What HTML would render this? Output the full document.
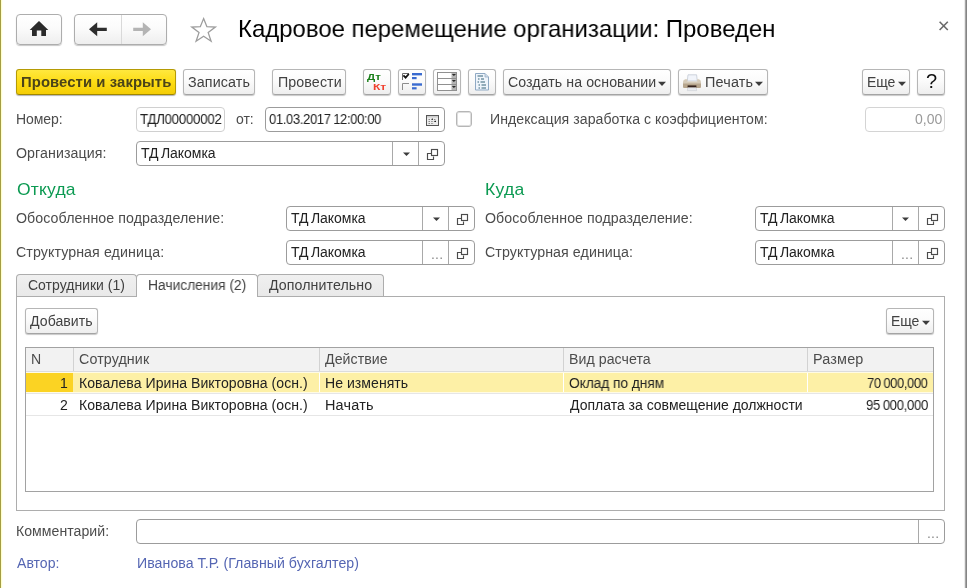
<!DOCTYPE html>
<html lang="ru"><head><meta charset="utf-8"><title>Кадровое перемещение организации</title>
<style>
html,body{margin:0;padding:0;}
body{width:967px;height:588px;position:relative;overflow:hidden;background:#fff;font-family:"Liberation Sans",sans-serif;}
.a{position:absolute;box-sizing:border-box;}
.t{position:absolute;white-space:pre;will-change:transform;}
.b{position:absolute;box-sizing:border-box;border:1px solid #b6b6b6;border-bottom-color:#a4a4a4;border-radius:3px;background:linear-gradient(#ffffff 0%,#fbfbfb 45%,#eeeeee 100%);box-shadow:0 1px 1px rgba(0,0,0,.22);}
.y{border-color:#b59b05;border-bottom-color:#a08700;background:linear-gradient(#ffe83e 0%,#fddc14 50%,#f4cd05 100%);box-shadow:0 1px 1px rgba(0,0,0,.3);}
.f{position:absolute;box-sizing:border-box;border:1px solid #9c9c9c;border-radius:4px;background:#fff;}
.v{position:absolute;width:1px;background:#a9a9a9;}
.tab{position:absolute;box-sizing:border-box;border:1px solid #adadad;border-bottom:none;border-radius:4px 4px 0 0;background:linear-gradient(#f0f0f0,#e9e9e9);}
.tab.on{background:#fff;}
svg{position:absolute;overflow:visible;}

</style></head><body>
<div class="a" style="left:0;top:0;width:1px;height:588px;background:#a49d44"></div>
<div class="a" style="left:1px;top:0;width:1px;height:588px;background:#ffffca"></div>
<div class="a" style="left:2px;top:0;width:1px;height:588px;background:#fffff2"></div>
<div class="a" style="left:964px;top:0;width:1px;height:588px;background:#ececec"></div>
<div class="a" style="left:965px;top:0;width:1px;height:588px;background:#a6a6a6"></div>
<div class="a" style="left:966px;top:0;width:1px;height:588px;background:#858585"></div>

<!-- nav buttons -->
<div class="b" style="left:16px;top:14px;width:46px;height:31px;border-radius:4px;border-color:#adadad"></div>
<div class="b" style="left:74px;top:14px;width:93px;height:31px;border-radius:4px;border-color:#adadad"></div>
<div class="v" style="left:121px;top:15px;height:29px;background:#d9d9d9"></div>

<!-- toolbar -->
<div class="b y" style="left:16px;top:69px;width:160px;height:26px"></div>
<div class="b" style="left:183px;top:69px;width:72px;height:26px"></div>
<div class="b" style="left:272px;top:69px;width:74px;height:26px"></div>
<div class="b" style="left:363px;top:69px;width:28px;height:26px"></div>
<div class="b" style="left:398px;top:69px;width:28px;height:26px"></div>
<div class="b" style="left:433px;top:69px;width:28px;height:26px"></div>
<div class="b" style="left:468px;top:69px;width:28px;height:26px"></div>
<div class="b" style="left:503px;top:69px;width:168px;height:26px"></div>
<div class="b" style="left:678px;top:69px;width:90px;height:26px"></div>
<div class="b" style="left:862px;top:69px;width:48px;height:26px"></div>
<div class="b" style="left:917px;top:69px;width:28px;height:26px"></div>

<!-- fields row 1 -->
<div class="f" style="left:136px;top:107px;width:89px;height:25px;border-color:#d0d0d0"></div>
<div class="f" style="left:265px;top:107px;width:180px;height:25px"></div>
<div class="v" style="left:418px;top:108px;height:23px"></div>
<div class="f" style="left:456px;top:111px;width:16px;height:16px;border-color:#b6b6b6;border-radius:3px;box-shadow:inset 0 0 0 1px #dedede"></div>
<div class="f" style="left:865px;top:107px;width:80px;height:25px;border-color:#d4d4d4"></div>
<!-- org -->
<div class="f" style="left:136px;top:141px;width:309px;height:25px"></div>
<div class="v" style="left:392px;top:142px;height:23px"></div>
<div class="v" style="left:418px;top:142px;height:23px"></div>
<!-- from -->
<div class="f" style="left:286px;top:206px;width:189px;height:25px"></div>
<div class="v" style="left:422px;top:207px;height:23px"></div>
<div class="v" style="left:448px;top:207px;height:23px"></div>
<div class="f" style="left:286px;top:240px;width:189px;height:25px"></div>
<div class="v" style="left:422px;top:241px;height:23px"></div>
<div class="v" style="left:448px;top:241px;height:23px"></div>
<!-- to -->
<div class="f" style="left:755px;top:206px;width:190px;height:25px"></div>
<div class="v" style="left:892px;top:207px;height:23px"></div>
<div class="v" style="left:918px;top:207px;height:23px"></div>
<div class="f" style="left:755px;top:240px;width:190px;height:25px"></div>
<div class="v" style="left:892px;top:241px;height:23px"></div>
<div class="v" style="left:918px;top:241px;height:23px"></div>

<!-- tab panel -->
<div class="a" style="left:16px;top:296px;width:929px;height:215px;border:1px solid #adadad;background:#fff"></div>
<div class="tab" style="left:16px;top:274px;width:121px;height:22px"></div>
<div class="tab on" style="left:136px;top:274px;width:122px;height:23px"></div>
<div class="tab" style="left:257px;top:274px;width:127px;height:22px"></div>

<div class="b" style="left:25px;top:308px;width:73px;height:26px"></div>
<div class="b" style="left:886px;top:308px;width:48px;height:26px"></div>

<!-- grid -->
<div class="a" style="left:25px;top:347px;width:909px;height:145px;border:1px solid #a2a2a2;background:#fff"></div>
<div class="a" style="left:26px;top:348px;width:907px;height:23px;background:#f2f2f2"></div>
<div class="a" style="left:26px;top:371px;width:907px;height:1px;background:#dcdcdc"></div>
<div class="v" style="left:73px;top:348px;height:23px;background:#d2d2d2"></div>
<div class="v" style="left:319px;top:348px;height:23px;background:#d2d2d2"></div>
<div class="v" style="left:563px;top:348px;height:23px;background:#d2d2d2"></div>
<div class="v" style="left:807px;top:348px;height:23px;background:#d2d2d2"></div>
<div class="a" style="left:26px;top:373px;width:47px;height:19px;background:#fbd323"></div>
<div class="a" style="left:73px;top:373px;width:246px;height:19px;background:#fdf0a6"></div>
<div class="a" style="left:320px;top:373px;width:243px;height:19px;background:#fdf0a6"></div>
<div class="a" style="left:564px;top:373px;width:243px;height:19px;background:#fdf0a6"></div>
<div class="a" style="left:808px;top:373px;width:125px;height:19px;background:#fdf0a6"></div>
<div class="a" style="left:26px;top:372px;width:907px;height:1px;background:#fffbe4"></div>
<div class="a" style="left:26px;top:392px;width:907px;height:1px;background:#fffbe4"></div>
<div class="a" style="left:26px;top:393px;width:907px;height:1px;background:#e6e6e6"></div>
<div class="a" style="left:26px;top:415px;width:907px;height:1px;background:#e6e6e6"></div>

<!-- comment -->
<div class="f" style="left:136px;top:519px;width:809px;height:25px"></div>
<div class="v" style="left:918px;top:520px;height:23px"></div>
<svg class="ic" width="967" height="588" viewBox="0 0 967 588" style="left:0;top:0">
<path d="M39 21.1 L48.3 29.9 H46 V36.1 H41.3 V30.5 H36.8 V36.1 H32 V29.9 H29.7 Z" fill="#2b2b2b"/>
<path d="M89 29.3 L97.2 22.3 V27.7 H106.8 V31.1 H97.2 V36.2 Z" fill="#2d2d2d"/>
<path d="M151 29.3 L142.8 22.3 V27.7 H133.2 V31.1 H142.8 V36.2 Z" fill="#b4b4b4"/>
<path d="M203.6 18.6 L206.9 26.7 L215.4 27.1 L208.2 32.6 L211.1 41.2 L203.6 36.2 L196.1 41.2 L199 32.6 L191.8 27.1 L200.3 26.7 Z" fill="none" stroke="#9c9c9c" stroke-width="1.3" stroke-linejoin="miter"/>
<path d="M939.6 21.8 L947.8 30 M947.8 21.8 L939.6 30" stroke="#6a6a6a" stroke-width="1.6" fill="none"/>
<path d="M658.0 81.7 H666.0 L662 85.89999999999999 Z" fill="#3c3c3c"/>
<path d="M755.0 81.7 H763.0 L759 85.89999999999999 Z" fill="#3c3c3c"/>
<path d="M898.0 81.7 H906.0 L902 85.89999999999999 Z" fill="#3c3c3c"/>
<path d="M922.0 320.7 H930.0 L926 324.90000000000003 Z" fill="#3c3c3c"/>
<g><path d="M402.5 80 V73.5 H409" fill="none" stroke="#6a6a6a" stroke-width="1"/><path d="M403.4 75.4 L405.6 77.6 L408.8 74" fill="none" stroke="#111" stroke-width="1.8"/><path d="M402.5 90 V83.5 H409" fill="none" stroke="#8c8c8c" stroke-width="1"/><rect x="412" y="73" width="10" height="2.4" fill="#3a6bd0"/><rect x="412" y="77" width="4.6" height="2.2" fill="#3a6bd0"/><rect x="412" y="83.3" width="10" height="2.4" fill="#3a6bd0"/><rect x="412" y="87.2" width="4.6" height="2.2" fill="#3a6bd0"/></g>
<g><rect x="437.5" y="72.5" width="19" height="6" fill="#fff" stroke="#909090" stroke-width="1"/><rect x="451.5" y="73.0" width="4.5" height="5" fill="#b4b4b4"/><path d="M451.8 73.9 H456 L453.9 76.1 Z" fill="#2a2a2a"/><rect x="437.5" y="78.5" width="19" height="6" fill="#fff" stroke="#909090" stroke-width="1"/><rect x="451.5" y="79.0" width="4.5" height="5" fill="#b4b4b4"/><path d="M451.8 79.9 H456 L453.9 82.1 Z" fill="#2a2a2a"/><rect x="437.5" y="84.5" width="19" height="6" fill="#fff" stroke="#909090" stroke-width="1"/><rect x="451.5" y="85.0" width="4.5" height="5" fill="#b4b4b4"/><path d="M451.8 85.9 H456 L453.9 88.1 Z" fill="#2a2a2a"/></g>
<g><path d="M475.5 73.5 H485 L488.5 77 V90 H475.5 Z" fill="#eef4fb" stroke="#8fa9c4" stroke-width="1"/><path d="M485 73.5 V77 H488.5" fill="#cfdcea" stroke="#9bb0c6" stroke-width="0.8"/><path d="M477.5 76 H483 M478 79 H479.5 M481 79 H484 M477.5 82 H479 M480.5 82 H485 M478.5 85 H480 M481.5 85 H486 M478.5 88 H480 M481.5 88 H486" stroke="#346379" stroke-width="1.1" fill="none"/></g>
<g><path d="M687.3 81 L688 74.8 H696.6 L697.3 81 Z" fill="#f1f4fa" stroke="#c3c9d4" stroke-width="0.8"/><path d="M685.2 79.2 H687.4 V81.4 H697.2 V79.2 H698.8 Q701 79.6 701 82 V86.4 Q701 87.9 699.5 87.9 H684.5 Q683 87.9 683 86.4 V82 Q683 79.6 685.2 79.2 Z" fill="#d5cbb9"/><path d="M683 83.4 H701 V86.4 Q701 87.9 699.5 87.9 H684.5 Q683 87.9 683 86.4 Z" fill="#b7a68d"/><rect x="687.6" y="85.4" width="8.8" height="2.3" fill="#35221a"/><path d="M687.8 87.7 H696.2 L696.7 90.6 H687.3 Z" fill="#e9ebef" stroke="#c9ccd2" stroke-width="0.6"/></g>
<g><rect x="426.5" y="115.5" width="12" height="10" fill="#ececec" stroke="#555" stroke-width="1"/><rect x="427" y="116" width="11" height="1.6" fill="#cfcfcf"/><path d="M428.5 119.5 H436.5 M428.5 121.5 H436.5 M428.5 123.5 H434" stroke="#8a8a8a" stroke-width="1" stroke-dasharray="1.5 1.2" fill="none"/><rect x="431.8" y="118.6" width="1.2" height="1.2" fill="#222"/><rect x="434.6" y="120.8" width="1.4" height="1.2" fill="#222"/></g>
<path d="M403.0 152.5 H410.0 L406.5 156.10000000000002 Z" fill="#3c3c3c"/>
<path d="M433.0 217.5 H440.0 L436.5 221.10000000000002 Z" fill="#3c3c3c"/>
<path d="M902.0 217.5 H909.0 L905.5 221.10000000000002 Z" fill="#3c3c3c"/>
<rect x="431.5" y="149.5" width="6" height="6" fill="none" stroke="#4c4c4c" stroke-width="1.15"/><path d="M431.0 153.5 H427.5 V159.5 H433.5 V156.5" fill="none" stroke="#4c4c4c" stroke-width="1.15"/>
<rect x="461.5" y="214.5" width="6" height="6" fill="none" stroke="#4c4c4c" stroke-width="1.15"/><path d="M461.0 218.5 H457.5 V224.5 H463.5 V221.5" fill="none" stroke="#4c4c4c" stroke-width="1.15"/>
<rect x="461.5" y="248.5" width="6" height="6" fill="none" stroke="#4c4c4c" stroke-width="1.15"/><path d="M461.0 252.5 H457.5 V258.5 H463.5 V255.5" fill="none" stroke="#4c4c4c" stroke-width="1.15"/>
<rect x="931.5" y="214.5" width="6" height="6" fill="none" stroke="#4c4c4c" stroke-width="1.15"/><path d="M931.0 218.5 H927.5 V224.5 H933.5 V221.5" fill="none" stroke="#4c4c4c" stroke-width="1.15"/>
<rect x="931.5" y="248.5" width="6" height="6" fill="none" stroke="#4c4c4c" stroke-width="1.15"/><path d="M931.0 252.5 H927.5 V258.5 H933.5 V255.5" fill="none" stroke="#4c4c4c" stroke-width="1.15"/>
</svg>

<div class="t" style="top:16.68px;font-size:24px;line-height:24px;font-weight:400;color:#000;letter-spacing:-0.019px;left:238px;transform-origin:0 50%;transform:scaleX(0.9978);">Кадровое перемещение организации: Проведен</div>
<div class="t" style="top:75.45px;font-size:14px;line-height:14px;font-weight:700;color:#4b4319;letter-spacing:0.082px;left:21px;transform-origin:0 50%;transform:scaleX(1.0603);">Провести и закрыть</div>
<div class="t" style="top:75.45px;font-size:14px;line-height:14px;font-weight:400;color:#414141;letter-spacing:0.120px;left:188px;transform-origin:0 50%;transform:scaleX(1.0220);">Записать</div>
<div class="t" style="top:75.45px;font-size:14px;line-height:14px;font-weight:400;color:#414141;letter-spacing:0.096px;left:278px;transform-origin:0 50%;transform:scaleX(1.0170);">Провести</div>
<div class="t" style="top:75.45px;font-size:14px;line-height:14px;font-weight:400;color:#414141;letter-spacing:0.062px;left:508px;transform-origin:0 50%;transform:scaleX(1.0125);">Создать на основании</div>
<div class="t" style="top:75.45px;font-size:14px;line-height:14px;font-weight:400;color:#414141;letter-spacing:0.167px;left:705px;transform-origin:0 50%;transform:scaleX(1.0292);">Печать</div>
<div class="t" style="top:75.45px;font-size:14px;line-height:14px;font-weight:400;color:#414141;letter-spacing:-0.122px;left:867px;transform-origin:0 50%;transform:scaleX(0.9864);">Еще</div>
<div class="t" style="top:71.37px;font-size:20px;line-height:20px;font-weight:400;color:#111;left:926px;">?</div>
<div class="t" style="top:72.26px;font-size:9.5px;line-height:9.5px;font-weight:700;color:#1a7f1a;left:367px;transform-origin:0 50%;transform:scaleX(1.2089);">Дт</div>
<div class="t" style="top:82.26px;font-size:9.5px;line-height:9.5px;font-weight:700;color:#f0402e;left:373px;transform-origin:0 50%;transform:scaleX(1.2632);">Кт</div>
<div class="t" style="top:112.45px;font-size:14px;line-height:14px;font-weight:400;color:#4c4c4c;letter-spacing:-0.057px;left:16px;transform-origin:0 50%;transform:scaleX(0.9906);">Номер:</div>
<div class="t" style="top:112.45px;font-size:14px;line-height:14px;font-weight:400;color:#222;letter-spacing:-0.298px;left:140px;transform-origin:0 50%;transform:scaleX(0.9516);">ТДЛ00000002</div>
<div class="t" style="top:112.45px;font-size:14px;line-height:14px;font-weight:400;color:#4c4c4c;letter-spacing:-0.020px;left:236px;transform-origin:0 50%;transform:scaleX(0.9963);">от:</div>
<div class="t" style="top:112.45px;font-size:14px;line-height:14px;font-weight:400;color:#222;letter-spacing:-0.364px;left:269px;transform-origin:0 50%;transform:scaleX(0.9280);word-spacing:-0.8px;">01.03.2017 12:00:00</div>
<div class="t" style="top:112.45px;font-size:14px;line-height:14px;font-weight:400;color:#4c4c4c;letter-spacing:0.041px;left:490px;transform-origin:0 50%;transform:scaleX(1.0083);">Индексация заработка с коэффициентом:</div>
<div class="t" style="top:112.45px;font-size:14px;line-height:14px;font-weight:400;color:#9a9a9a;right:25px;">0,00</div>
<div class="t" style="top:146.45px;font-size:14px;line-height:14px;font-weight:400;color:#4c4c4c;letter-spacing:0.073px;left:16px;transform-origin:0 50%;transform:scaleX(1.0143);">Организация:</div>
<div class="t" style="top:146.45px;font-size:14px;line-height:14px;font-weight:400;color:#222;letter-spacing:-0.022px;left:141px;transform-origin:0 50%;transform:scaleX(0.9960);word-spacing:-1.5px;">ТД Лакомка</div>
<div class="t" style="top:180.91px;font-size:17px;line-height:17px;font-weight:400;color:#0c9a52;letter-spacing:0.199px;left:17px;transform-origin:0 50%;transform:scaleX(1.0277);">Откуда</div>
<div class="t" style="top:180.91px;font-size:17px;line-height:17px;font-weight:400;color:#0c9a52;letter-spacing:0.252px;left:485px;transform-origin:0 50%;transform:scaleX(1.0327);">Куда</div>
<div class="t" style="top:211.45px;font-size:14px;line-height:14px;font-weight:400;color:#4c4c4c;letter-spacing:0.072px;left:16px;transform-origin:0 50%;transform:scaleX(1.0142);">Обособленное подразделение:</div>
<div class="t" style="top:245.45px;font-size:14px;line-height:14px;font-weight:400;color:#4c4c4c;letter-spacing:0.078px;left:16px;transform-origin:0 50%;transform:scaleX(1.0158);">Структурная единица:</div>
<div class="t" style="top:211.45px;font-size:14px;line-height:14px;font-weight:400;color:#222;letter-spacing:-0.022px;left:291px;transform-origin:0 50%;transform:scaleX(0.9960);word-spacing:-1.5px;">ТД Лакомка</div>
<div class="t" style="top:245.45px;font-size:14px;line-height:14px;font-weight:400;color:#222;letter-spacing:-0.022px;left:291px;transform-origin:0 50%;transform:scaleX(0.9960);word-spacing:-1.5px;">ТД Лакомка</div>
<div class="t" style="top:211.45px;font-size:14px;line-height:14px;font-weight:400;color:#4c4c4c;letter-spacing:0.065px;left:485px;transform-origin:0 50%;transform:scaleX(1.0127);">Обособленное подразделение:</div>
<div class="t" style="top:245.45px;font-size:14px;line-height:14px;font-weight:400;color:#4c4c4c;letter-spacing:0.076px;left:485px;transform-origin:0 50%;transform:scaleX(1.0154);">Структурная единица:</div>
<div class="t" style="top:211.45px;font-size:14px;line-height:14px;font-weight:400;color:#222;letter-spacing:-0.022px;left:760px;transform-origin:0 50%;transform:scaleX(0.9960);word-spacing:-1.5px;">ТД Лакомка</div>
<div class="t" style="top:245.45px;font-size:14px;line-height:14px;font-weight:400;color:#222;letter-spacing:-0.022px;left:760px;transform-origin:0 50%;transform:scaleX(0.9960);word-spacing:-1.5px;">ТД Лакомка</div>
<div class="t" style="top:247.45px;font-size:14px;line-height:14px;font-weight:400;color:#8a8a8a;left:431px;letter-spacing:0.2px;">...</div>
<div class="t" style="top:247.45px;font-size:14px;line-height:14px;font-weight:400;color:#8a8a8a;left:901px;letter-spacing:0.2px;">...</div>
<div class="t" style="top:525.95px;font-size:14px;line-height:14px;font-weight:400;color:#8a8a8a;left:927px;letter-spacing:0.2px;">...</div>
<div class="t" style="top:278.45px;font-size:14px;line-height:14px;font-weight:400;color:#414141;letter-spacing:0.008px;left:28px;">Сотрудники (1)</div>
<div class="t" style="top:278.45px;font-size:14px;line-height:14px;font-weight:400;color:#414141;letter-spacing:-0.048px;left:148px;transform-origin:0 50%;transform:scaleX(0.9905);">Начисления (2)</div>
<div class="t" style="top:278.45px;font-size:14px;line-height:14px;font-weight:400;color:#414141;letter-spacing:0.074px;left:269px;transform-origin:0 50%;transform:scaleX(1.0135);">Дополнительно</div>
<div class="t" style="top:314.45px;font-size:14px;line-height:14px;font-weight:400;color:#414141;letter-spacing:0.043px;left:30px;transform-origin:0 50%;transform:scaleX(1.0073);">Добавить</div>
<div class="t" style="top:314.45px;font-size:14px;line-height:14px;font-weight:400;color:#414141;letter-spacing:-0.122px;left:891px;transform-origin:0 50%;transform:scaleX(0.9864);">Еще</div>
<div class="t" style="top:352.45px;font-size:14px;line-height:14px;font-weight:400;color:#4c4c4c;left:31px;transform-origin:0 50%;transform:scaleX(1.0065);">N</div>
<div class="t" style="top:352.45px;font-size:14px;line-height:14px;font-weight:400;color:#4c4c4c;letter-spacing:0.105px;left:79px;transform-origin:0 50%;transform:scaleX(1.0192);">Сотрудник</div>
<div class="t" style="top:352.45px;font-size:14px;line-height:14px;font-weight:400;color:#4c4c4c;letter-spacing:0.062px;left:325px;transform-origin:0 50%;transform:scaleX(1.0108);">Действие</div>
<div class="t" style="top:352.45px;font-size:14px;line-height:14px;font-weight:400;color:#4c4c4c;letter-spacing:0.055px;left:569px;transform-origin:0 50%;transform:scaleX(1.0106);">Вид расчета</div>
<div class="t" style="top:352.45px;font-size:14px;line-height:14px;font-weight:400;color:#4c4c4c;letter-spacing:0.167px;left:813px;transform-origin:0 50%;transform:scaleX(1.0279);">Размер</div>
<div class="t" style="top:376.45px;font-size:14px;line-height:14px;font-weight:400;color:#222;right:899px;">1</div>
<div class="t" style="top:376.45px;font-size:14px;line-height:14px;font-weight:400;color:#222;letter-spacing:0.026px;left:79px;transform-origin:0 50%;transform:scaleX(1.0053);">Ковалева Ирина Викторовна (осн.)</div>
<div class="t" style="top:376.45px;font-size:14px;line-height:14px;font-weight:400;color:#222;letter-spacing:0.026px;left:325px;transform-origin:0 50%;transform:scaleX(1.0048);">Не изменять</div>
<div class="t" style="top:376.45px;font-size:14px;line-height:14px;font-weight:400;color:#222;letter-spacing:-0.083px;left:569px;transform-origin:0 50%;transform:scaleX(0.9846);">Оклад по дням</div>
<div class="t" style="top:376.45px;font-size:14px;line-height:14px;font-weight:400;color:#222;letter-spacing:-0.411px;left:867px;transform-origin:0 50%;transform:scaleX(0.9248);word-spacing:-0.5px;">70 000,000</div>
<div class="t" style="top:398.45px;font-size:14px;line-height:14px;font-weight:400;color:#222;right:899px;">2</div>
<div class="t" style="top:398.45px;font-size:14px;line-height:14px;font-weight:400;color:#222;letter-spacing:0.026px;left:79px;transform-origin:0 50%;transform:scaleX(1.0053);">Ковалева Ирина Викторовна (осн.)</div>
<div class="t" style="top:398.45px;font-size:14px;line-height:14px;font-weight:400;color:#222;letter-spacing:0.182px;left:325px;transform-origin:0 50%;transform:scaleX(1.0319);">Начать</div>
<div class="t" style="top:398.45px;font-size:14px;line-height:14px;font-weight:400;color:#222;left:570px;">Доплата за совмещение должности</div>
<div class="t" style="top:398.45px;font-size:14px;line-height:14px;font-weight:400;color:#222;letter-spacing:-0.344px;left:866px;transform-origin:0 50%;transform:scaleX(0.9363);word-spacing:-0.5px;">95 000,000</div>
<div class="t" style="top:524.45px;font-size:14px;line-height:14px;font-weight:400;color:#4c4c4c;letter-spacing:0.036px;left:16px;transform-origin:0 50%;transform:scaleX(1.0067);">Комментарий:</div>
<div class="t" style="top:556.45px;font-size:14px;line-height:14px;font-weight:400;color:#5566b3;letter-spacing:0.016px;left:17px;transform-origin:0 50%;transform:scaleX(1.0029);">Автор:</div>
<div class="t" style="top:556.45px;font-size:14px;line-height:14px;font-weight:400;color:#5566b3;letter-spacing:0.047px;left:137px;transform-origin:0 50%;transform:scaleX(1.0101);">Иванова Т.Р. (Главный бухгалтер)</div>
</body></html>
